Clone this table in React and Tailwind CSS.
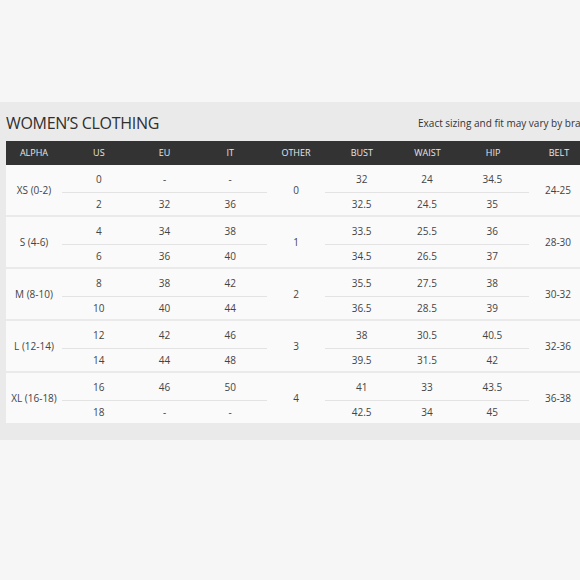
const sizes = [
  { alpha: 'XS (0-2)', other: '0', belt: '24-25', rows: [['0', '-', '-', '32', '24', '34.5'], ['2', '32', '36', '32.5', '24.5', '35']] },
  { alpha: 'S (4-6)', other: '1', belt: '28-30', rows: [['4', '34', '38', '33.5', '25.5', '36'], ['6', '36', '40', '34.5', '26.5', '37']] },
  { alpha: 'M (8-10)', other: '2', belt: '30-32', rows: [['8', '38', '42', '35.5', '27.5', '38'], ['10', '40', '44', '36.5', '28.5', '39']] },
  { alpha: 'L (12-14)', other: '3', belt: '32-36', rows: [['12', '42', '46', '38', '30.5', '40.5'], ['14', '44', '48', '39.5', '31.5', '42']] },
  { alpha: 'XL (16-18)', other: '4', belt: '36-38', rows: [['16', '46', '50', '41', '33', '43.5'], ['18', '-', '-', '42.5', '34', '45']] },
];

const headers = ['ALPHA', 'US', 'EU', 'IT', 'OTHER', 'BUST', 'WAIST', 'HIP', 'BELT'];

function SubBlock({ rows, from, width }) {
  return (
    <div className="flex flex-col shrink-0" style={{ width }}>
      <div className="h-[27px] grid grid-cols-3 items-center pt-[1px]">
        {rows[0].slice(from, from + 3).map((v, i) => (
          <span key={i} className="text-center">{v}</span>
        ))}
      </div>
      <div className="h-px bg-[#e3e3e3] mx-[-4px]" />
      <div className="h-[22px] grid grid-cols-3 items-center">
        {rows[1].slice(from, from + 3).map((v, i) => (
          <span key={i} className="text-center">{v}</span>
        ))}
      </div>
    </div>
  );
}

export default function App() {
  return (
    <div className="w-[580px] h-[580px] bg-[#f6f6f6] overflow-hidden" style={{ fontFamily: '"Open Sans", "Noto Sans", sans-serif' }}>
      <div className="mt-[102px] h-[338px] bg-[#ebeaea] pl-[6px] overflow-hidden">
        {/* Title row */}
        <div className="w-[600px] h-[39px] flex items-center">
          <h1 className="shrink-0 whitespace-nowrap text-[16px] text-[#2f2f2f] tracking-[-0.3px] pt-[3px]">WOMEN’S CLOTHING</h1>
          <p className="shrink-0 ml-[259px] text-[10px] text-[#333] whitespace-nowrap pt-[4px]">
            Exact sizing and fit may vary by brand.
          </p>
        </div>

        {/* Header */}
        <div className="w-[590px] h-[24px] bg-[#333333] flex items-center text-[9px] text-[#e6e6e6]">
          {headers.map((h, i) => (
            <span
              key={h}
              className={`text-center shrink-0 ${i === 0 ? 'w-[60px] pr-1' : i === 4 || i === 8 ? 'w-[66px]' : 'w-[65.67px]'}`}
            >
              {h}
            </span>
          ))}
        </div>

        {/* Body */}
        <div className="w-[590px] bg-[#fafafa] text-[10px] text-[#444]">
          {sizes.map((s) => (
            <div key={s.alpha} className="flex h-[52px] border-b-2 border-[#ebeaea]">
              <div className="w-[60px] shrink-0 flex items-center justify-center pr-1">{s.alpha}</div>
              <SubBlock rows={s.rows} from={0} width={197} />
              <div className="w-[66px] shrink-0 flex items-center justify-center">{s.other}</div>
              <SubBlock rows={s.rows} from={3} width={196} />
              <div className="w-[66px] shrink-0 flex items-center justify-center">{s.belt}</div>
            </div>
          ))}
        </div>
      </div>
    </div>
  );
}
